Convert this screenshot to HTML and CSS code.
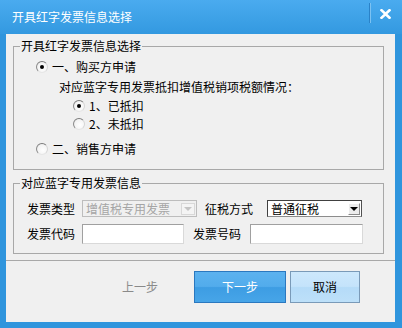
FILE: index.html
```html
<!DOCTYPE html>
<html lang="zh-CN">
<head>
<meta charset="utf-8">
<title>开具红字发票信息选择</title>
<link rel="stylesheet" href="styles.css">
</head>
<body>
<div class="window">
  <div class="titlebar">
    <span class="title">开具红字发票信息选择</span>
    <span class="tsep"></span>
    <span class="close"><svg width="11" height="10" viewBox="0 0 11 10"><path d="M1.5 1.2 L9.5 8.8 M9.5 1.2 L1.5 8.8" stroke="#fff" stroke-width="2.6" stroke-linecap="square" fill="none"/></svg></span>
  </div>
  <div class="body">
    <fieldset class="group g1">
      <legend>开具红字发票信息选择</legend>
      <div class="radio top"><span class="dot checked"></span><span>一、购买方申请</span></div>
      <div class="note">对应蓝字专用发票抵扣增值税销项税额情况：</div>
      <div class="radio sub s1"><span class="dot checked"></span><span>1、已抵扣</span></div>
      <div class="radio sub s2"><span class="dot"></span><span>2、未抵扣</span></div>
      <div class="radio bot"><span class="dot"></span><span>二、销售方申请</span></div>
    </fieldset>
    <fieldset class="group g2">
      <legend>对应蓝字专用发票信息</legend>
      <div class="frow r1">
        <span class="lbl">发票类型</span>
        <div class="select disabled w1"><span class="val">增值税专用发票</span><span class="dd"><span class="tri"></span></span></div>
        <span class="lbl l2">征税方式</span>
        <div class="select w2"><span class="val">普通征税</span><span class="dd"><span class="tri"></span></span></div>
      </div>
      <div class="frow r2">
        <span class="lbl">发票代码</span>
        <div class="input i1"></div>
        <span class="lbl l3">发票号码</span>
        <div class="input i2"></div>
      </div>
    </fieldset>
    <div class="sep"></div>
    <div class="buttons">
      <span class="btn prev">上一步</span>
      <span class="btn next">下一步</span>
      <span class="btn cancel">取消</span>
    </div>
  </div>
</div>
</body>
</html>
```
FILE: styles.css
```css
* { box-sizing: border-box; }
html, body { margin: 0; padding: 0; }
body {
  font-family: "Noto Sans CJK SC", "Liberation Sans", sans-serif;
  font-size: 12px;
  line-height: 14px;
  color: #000;
}
.window {
  width: 402px;
  height: 328px;
  background: #2f95dd;
  display: flex;
  flex-direction: column;
}
.titlebar {
  height: 34px;
  flex: none;
  display: flex;
  align-items: flex-start;
  background: linear-gradient(#4aabef, #3399e0);
}
.title {
  color: #fff;
  margin-top: 10px;
  padding-left: 12px;
  line-height: 14px;
}
.tsep {
  margin-left: auto;
  margin-top: 3px;
  width: 1px;
  height: 20px;
  background: #2a82c8;
  box-shadow: 1px 0 0 #7cc2f2;
}
.close {
  margin-left: 10px;
  margin-top: 9px;
  margin-right: 11px;
  width: 11px;
  height: 10px;
  display: flex;
}
.body {
  flex: 1;
  margin: 0 7px 6px 6px;
  background: #f0f0f0;
  display: flex;
  flex-direction: column;
}
.group {
  margin: 0 11px 0 7px;
  border: 1px solid #a8a8a8;
  padding: 0 0 0 6px;
  min-width: 0;
}
.group legend {
  padding: 0 1px;
  line-height: 14px;
  height: 14px;
}
.g1 { margin-top: 5px; padding-bottom: 11px; }
.g2 { margin-top: 6px; padding-bottom: 9px; }

.radio {
  display: flex;
  align-items: center;
  height: 18px;
  gap: 4px;
}
.radio.top { margin-top: 5px; margin-left: 16px; }
.note { margin-top: 2px; margin-left: 39px; height: 18px; display: flex; align-items: center; }
.radio.sub { margin-left: 53px; }
.radio.s1 { margin-top: 1px; }
.radio.s2 { margin-top: 0; }
.radio.bot { margin-top: 7px; margin-left: 16px; }
.dot {
  width: 12px;
  height: 12px;
  border-radius: 50%;
  border: 1px solid;
  border-color: #7b7b7b #d6d6d6 #e6e6e6 #8a8a8a;
  background: radial-gradient(circle at 60% 60%, #ffffff 0%, #f4f4f4 60%, #dcdcdc 100%);
  display: flex;
  align-items: center;
  justify-content: center;
  flex: none;
}
.dot.checked::after {
  content: "";
  width: 4px;
  height: 4px;
  border-radius: 50%;
  background: #000;
}

.frow { display: flex; align-items: center; }
.r1 { margin-top: 10px; height: 17px; }
.r2 { margin-top: 7px; height: 20px; }
.lbl { margin-left: 7px; width: 48px; flex: none; white-space: nowrap; }
.lbl.l2 { margin-left: 8px; }
.lbl.l3 { margin-left: 9px; }
.select {
  height: 17px;
  display: flex;
  align-items: center;
  flex: none;
  position: relative;
}
.select .val { padding-left: 3px; flex: 1; white-space: nowrap; }
.select .dd {
  width: 14px;
  height: 12px;
  margin-right: 1px;
  display: flex;
  align-items: center;
  justify-content: center;
}
.tri {
  width: 0;
  height: 0;
  border-left: 4px solid transparent;
  border-right: 4px solid transparent;
  border-top: 4px solid #000;
}
.select.disabled {
  margin-left: 7px;
  width: 115px;
  border: 1px solid #bdbdbd;
  background: #f0f0f0;
  color: #a5a5a5;
}
.select.disabled .dd {
  background: #f4f4f4;
  border: 1px solid #d8d8d8;
}
.select.disabled .tri { border-top-color: #c4c4c4; }
.select.w2 {
  margin-left: 14px;
  width: 95px;
  border: 1px solid;
  border-color: #404040 #505050 #8c8c8c #404040;
  background: #fff;
}
.select.w2 .dd {
  width: 12px;
  background: #ececec;
  border: 1px solid;
  border-color: #ffffff #8a8a8a #8a8a8a #ffffff;
}
.input {
  height: 20px;
  flex: none;
  background: #fff;
  border: 1px solid;
  border-color: #a0a0a0 #d9d9d9 #d9d9d9 #a0a0a0;
}
.input.i1 { margin-left: 7px; width: 102px; }
.input.i2 { margin-left: 9px; width: 113px; }

.sep {
  margin-top: 6px;
  height: 1px;
  background: #a8a8a8;
  flex: none;
}
.buttons {
  margin-top: 10px;
  display: flex;
  justify-content: flex-end;
  padding-right: 35px;
}
.btn {
  height: 32px;
  display: flex;
  align-items: center;
  justify-content: center;
}
.prev {
  width: 88px;
  margin-right: 10px;
  color: #8a8a8a;
}
.next {
  width: 92px;
  margin-right: 4px;
  color: #fff;
  border: 1px solid #2b78bf;
  background: linear-gradient(#5cb2ef 0%, #52acec 48%, #3d9de3 52%, #47a5e8 100%);
}
.cancel {
  width: 70px;
  border: 1px solid #7a9ab8;
  background: linear-gradient(#cde8fc 0%, #c4e3fb 48%, #b5dbf8 52%, #bde0f9 100%);
}
```
